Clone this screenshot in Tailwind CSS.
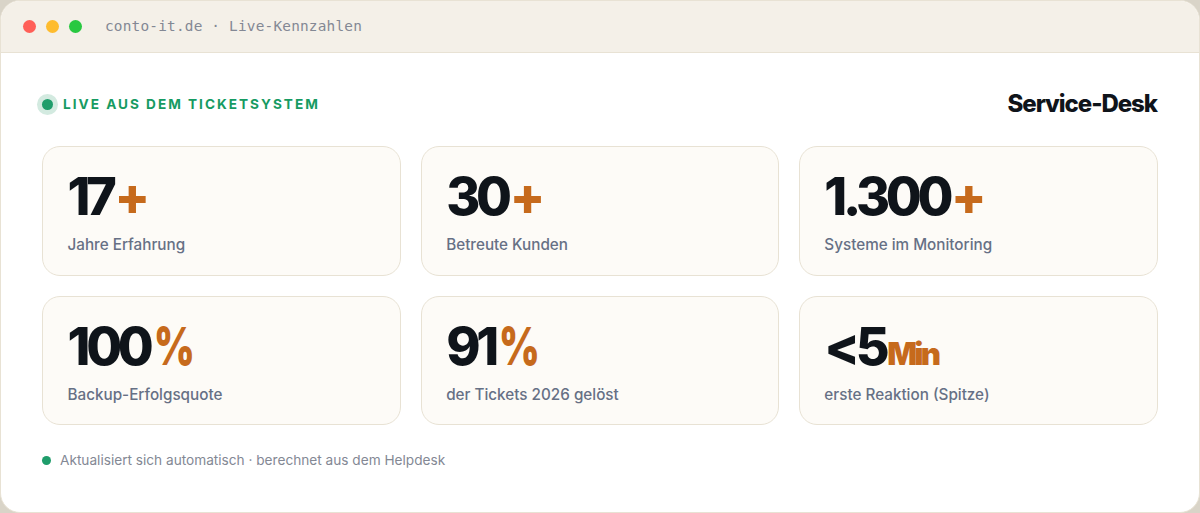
<!DOCTYPE html>
<html lang="de">
<head>
    <meta charset="UTF-8">
    <title>Live-Kennzahlen</title>
    <script src="https://cdn.jsdelivr.net/npm/@tailwindcss/browser@4"></script>
</head>
<body class="bg-[#d9d4c8] h-[513px] overflow-hidden font-['Inter',sans-serif]">

    <div class="h-[513px] rounded-[20px] border border-[#e8e2d4] bg-white overflow-hidden flex flex-col">
        <!-- Title bar -->
        <div class="h-[52px] shrink-0 bg-[#f4f0e8] border-b border-[#e8e2d4] flex items-center pl-[22px]">
            <span class="w-[13px] h-[13px] rounded-full bg-[#ff5f57]"></span>
            <span class="w-[13px] h-[13px] rounded-full bg-[#febc2e] ml-[10px]"></span>
            <span class="w-[13px] h-[13px] rounded-full bg-[#28c840] ml-[10px]"></span>
            <span class="ml-[23px] font-['DejaVu_Sans_Mono',monospace] text-[14.4px] tracking-[0.2px] text-[#838894]">conto-it.de · Live-Kennzahlen</span>
        </div>

        <div class="flex-1 px-[41px] pt-[35px]">
            <!-- Head row -->
            <div class="flex items-center justify-between h-[32px]">
                <div class="flex items-center">
                    <span class="w-[21px] h-[21px] -ml-[5px] rounded-full bg-[#d3eae0] flex items-center justify-center">
                        <span class="w-[11px] h-[11px] rounded-full bg-[#1f9d6b]"></span>
                    </span>
                    <span class="ml-[5px] text-[13.6px] font-bold tracking-[2px] text-[#169b62]">LIVE AUS DEM TICKETSYSTEM</span>
                </div>
                <span class="pr-px text-[24px] font-[850] tracking-[-1.05px] text-[#0f141a]">Service-Desk</span>
            </div>

            <!-- Cards -->
            <div class="grid grid-cols-3 gap-[20px] mt-[26px]">
                <div class="h-[129.5px] rounded-[18px] border border-[#e8e2d4] bg-[#fdfbf7] pl-[24.5px] pt-[21px]">
                    <div class="h-[58px] flex items-baseline text-[52px] leading-[58px] font-[850] tracking-[-4.3px] text-[#0f141a]">17<span class="ml-[2px] font-extrabold text-[#c66a1c]">+</span></div>
                    <div class="mt-[8px] text-[15.25px] font-medium text-[#667085]">Jahre Erfahrung</div>
                </div>
                <div class="h-[129.5px] rounded-[18px] border border-[#e8e2d4] bg-[#fdfbf7] pl-[24.5px] pt-[21px]">
                    <div class="h-[58px] flex items-baseline text-[52px] leading-[58px] font-[850] tracking-[-4.3px] text-[#0f141a]">30<span class="ml-[2px] font-extrabold text-[#c66a1c]">+</span></div>
                    <div class="mt-[8px] text-[15.25px] font-medium text-[#667085]">Betreute Kunden</div>
                </div>
                <div class="h-[129.5px] rounded-[18px] border border-[#e8e2d4] bg-[#fdfbf7] pl-[24px] pt-[21px]">
                    <div class="h-[58px] flex items-baseline text-[52px] leading-[58px] font-[850] tracking-[-4.3px] text-[#0f141a]">1.300<span class="ml-[2px] font-extrabold text-[#c66a1c]">+</span></div>
                    <div class="mt-[8px] text-[15.25px] font-medium text-[#667085]">Systeme im Monitoring</div>
                </div>
                <div class="h-[129.5px] rounded-[18px] border border-[#e8e2d4] bg-[#fdfbf7] pl-[24.5px] pt-[21px]">
                    <div class="h-[58px] flex items-baseline text-[52px] leading-[58px] font-[850] tracking-[-4.3px] text-[#0f141a]">100<span class="ml-[4px] inline-block origin-left scale-x-[0.75] font-black text-[#c66a1c]">%</span></div>
                    <div class="mt-[8px] text-[15.25px] font-medium text-[#667085]">Backup-Erfolgsquote</div>
                </div>
                <div class="h-[129.5px] rounded-[18px] border border-[#e8e2d4] bg-[#fdfbf7] pl-[24.5px] pt-[21px]">
                    <div class="h-[58px] flex items-baseline text-[52px] leading-[58px] font-[850] tracking-[-4.3px] text-[#0f141a]">91<span class="ml-[4px] inline-block origin-left scale-x-[0.75] font-black text-[#c66a1c]">%</span></div>
                    <div class="mt-[8px] text-[15.25px] font-medium text-[#667085]">der Tickets 2026 gelöst</div>
                </div>
                <div class="h-[129.5px] rounded-[18px] border border-[#e8e2d4] bg-[#fdfbf7] pl-[24px] pt-[21px]">
                    <div class="h-[58px] flex items-baseline text-[52px] leading-[58px] font-[850] tracking-[-4.3px] text-[#0f141a]">&lt;5<span class="ml-[2px] text-[31.2px] font-black tracking-[-2.8px] text-[#c66a1c]">Min</span></div>
                    <div class="mt-[8px] text-[15.25px] font-medium text-[#667085]">erste Reaktion (Spitze)</div>
                </div>
            </div>

            <!-- Footer note -->
            <div class="flex items-center mt-[25px]">
                <span class="w-[9px] h-[9px] rounded-full bg-[#1f9d6b]"></span>
                <span class="ml-[9px] text-[13.65px] text-[#838894]">Aktualisiert sich automatisch · berechnet aus dem Helpdesk</span>
            </div>
        </div>
    </div>

</body>
</html>
